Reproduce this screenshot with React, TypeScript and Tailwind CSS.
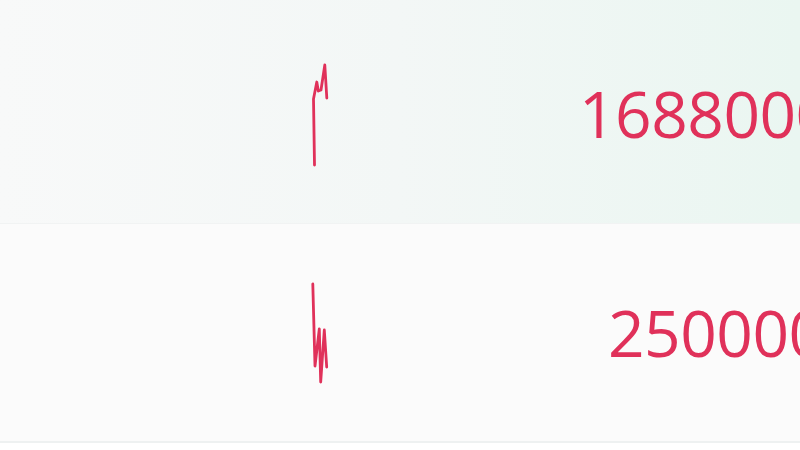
const ROWS = [
  {
    value: '1688000',
    bg: 'bg-gradient-to-r from-[#f8f9f9] via-[#f3f7f6] to-[#eaf6f1]',
    height: 'h-[224px]',
    pad: 'pl-[579px]',
    textTop: 'pt-[82px]',
    points: '314.5,165 313.5,99 316.8,82 318.3,91 321,90 324.8,65 326.8,98',
  },
  {
    value: '2500000',
    bg: 'bg-[#fbfbfb]',
    height: 'h-[219px]',
    pad: 'pl-[608px]',
    textTop: 'pt-[77px]',
    points: '312.8,285 315,367 319.3,330 320.7,383 324.3,331 326.7,368',
  },
]

function Sparkline({ points, offsetY }: { points: string; offsetY: number }) {
  return (
    <svg
      className="absolute left-0 top-0"
      width="800"
      height="224"
      viewBox={`0 ${offsetY} 800 224`}
      fill="none"
    >
      <polyline
        points={points}
        stroke="#e0315a"
        strokeWidth="2.8"
        strokeLinejoin="round"
        strokeLinecap="round"
      />
    </svg>
  )
}

export default function App() {
  return (
    <div className="h-[450px] w-[800px] overflow-hidden bg-white font-['Open_Sans','Liberation_Sans',sans-serif]">
      {ROWS.map((row, i) => (
        <div
          key={row.value}
          className={`relative ${row.height} ${row.bg} ${i === 0 ? 'border-b border-[#f1f3f3]' : 'border-b-2 border-[#eef1f1]'}`}
        >
          <Sparkline points={row.points} offsetY={i === 0 ? 0 : 225} />
          <div className={`${row.pad} ${row.textTop} whitespace-nowrap text-[64px] leading-none tracking-[-0.5px] text-[#e0315a]`}>
            {row.value}
          </div>
        </div>
      ))}
    </div>
  )
}
